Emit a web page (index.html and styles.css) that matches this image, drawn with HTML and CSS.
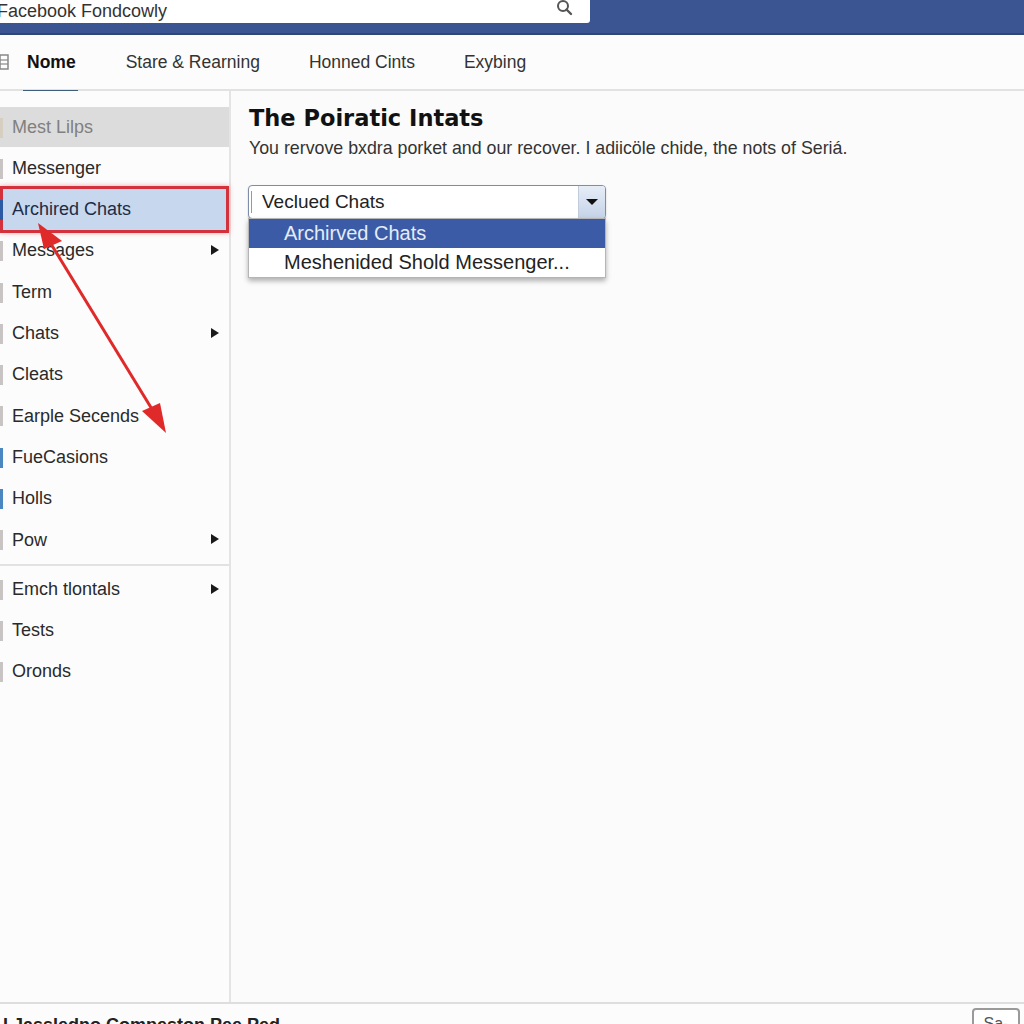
FILE: index.html
```html
<!DOCTYPE html>
<html lang="en">
<head>
    <meta charset="UTF-8">
    <title>Facebook Fondcowly</title>
    <link rel="stylesheet" href="styles.css">
</head>
<body>

    <div class="topbar">
        <div class="search-box">
            <span class="search-text">Facebook Fondcowly</span>
            <svg class="search-icon" width="18" height="18" viewBox="0 0 18 18">
                <circle cx="7" cy="6" r="5" fill="none" stroke="#555" stroke-width="2"/>
                <line x1="10.5" y1="9.5" x2="15" y2="14" stroke="#555" stroke-width="2.4" stroke-linecap="round"/>
            </svg>
        </div>
    </div>

    <div class="tabs">
        <svg class="tab-icon" width="10" height="16" viewBox="0 0 10 16">
            <rect x="0" y="1" width="8" height="14" fill="none" stroke="#888" stroke-width="1.5"/>
            <line x1="0" y1="6" x2="8" y2="6" stroke="#888" stroke-width="1.2"/>
            <line x1="0" y1="10" x2="8" y2="10" stroke="#888" stroke-width="1.2"/>
        </svg>
        <span class="tab active">Nome</span>
        <span class="tab">Stare &amp; Rearning</span>
        <span class="tab">Honned Cints</span>
        <span class="tab">Exybing</span>
    </div>

    <div class="layout">
        <div class="sidebar">
            <div class="side-item muted">Mest Lilps</div>
            <div class="side-item">Messenger</div>
            <div class="side-item selected">Archired Chats</div>
            <div class="side-item has-sub">Messages</div>
            <div class="side-item">Term</div>
            <div class="side-item has-sub">Chats</div>
            <div class="side-item">Cleats</div>
            <div class="side-item">Earple Secends</div>
            <div class="side-item blue">FueCasions</div>
            <div class="side-item blue">Holls</div>
            <div class="side-item has-sub">Pow</div>
            <div class="side-divider"></div>
            <div class="side-item has-sub">Emch tlontals</div>
            <div class="side-item">Tests</div>
            <div class="side-item">Oronds</div>
        </div>

        <div class="main">
            <h1 class="title">The Poiratic Intats</h1>
            <p class="intro">You rervove bxdra porket and our recover. I adiicöle chide, the nots of Seriá.</p>

            <div class="select-wrap">
                <div class="select">
                    <span class="select-value">Veclued Chats</span>
                    <span class="select-btn"><span class="caret"></span></span>
                </div>
                <div class="select-menu">
                    <div class="menu-option highlighted">Archirved Chats</div>
                    <div class="menu-option">Meshenided Shold Messenger...</div>
                </div>
            </div>
        </div>

        <svg class="annotation" width="200" height="240" viewBox="0 0 200 240">
            <line x1="48" y1="28" x2="158" y2="208" stroke="#e02a2a" stroke-width="3"/>
            <polygon points="38,12 62,30 44,38" fill="#e02a2a"/>
            <polygon points="166,222 142,200 160,192" fill="#e02a2a"/>
        </svg>
    </div>

    <div class="footer">
        <span class="footer-text">I Jassledno Compeston Pee Ped</span>
        <span class="footer-btn">Sa-</span>
    </div>

</body>
</html>
```

FILE: styles.css
```css
* {
    margin: 0;
    padding: 0;
    box-sizing: border-box;
}

body {
    width: 1024px;
    height: 1024px;
    overflow: hidden;
    background: #fbfbfb;
    font-family: "Liberation Sans", Arial, sans-serif;
    color: #222;
}

.topbar {
    height: 35px;
    background: #3b5593;
    border-bottom: 2px solid #2f4676;
}

.search-box {
    width: 590px;
    height: 23px;
    background: #fff;
    border-radius: 0 0 3px 0;
    display: flex;
    align-items: center;
    justify-content: space-between;
    padding-right: 16px;
}

.search-text {
    margin-left: -3px;
    margin-top: -2px;
    font-size: 18px;
    line-height: 20px;
    color: #333;
}

.search-icon {
    margin-top: -6px;
}

.tabs {
    height: 56px;
    background: #fcfcfc;
    border-bottom: 2px solid #e2e2e2;
    display: flex;
    align-items: center;
}

.tab-icon {
    margin-left: 0;
    margin-right: 17px;
}

.tab {
    font-size: 17.5px;
    color: #333;
    margin-right: 49px;
    padding: 8px 0;
    position: relative;
}

.tab.active {
    font-weight: bold;
    color: #111;
    margin-right: 50px;
}

.tab.active::after {
    content: "";
    position: absolute;
    left: -4px;
    right: -2px;
    bottom: -12px;
    height: 3px;
    background: #3d5f7c;
}

.layout {
    display: flex;
    height: 911px;
    position: relative;
}

.sidebar {
    width: 231px;
    border-right: 2px solid #e4e4e4;
    padding-top: 16px;
    background: #fcfcfc;
}

.side-item {
    height: 41.3px;
    display: flex;
    align-items: center;
    padding-left: 12px;
    font-size: 18px;
    color: #2a2a2a;
    position: relative;
}

.side-item::before {
    content: "";
    position: absolute;
    left: 0;
    top: 11px;
    width: 3px;
    height: 20px;
    background: #c9c4c4;
}

.side-item.muted {
    background: #dcdcdc;
    color: #808080;
    height: 40px;
    margin-bottom: 1px;
}

.side-item.muted::before {
    background: #d6cec0;
}

.side-item.selected {
    background: #c7d7ee;
    outline: 3px solid #d3323c;
    outline-offset: -3px;
    box-shadow: 0 0 5px rgba(230, 60, 60, 0.45);
    height: 47px;
    margin: -3px 0 -3px;
    color: #1d2c44;
}

.side-item.selected::before {
    background: #2b5aa3;
    top: 14px;
}

.side-item.blue::before {
    background: #4a86c0;
}

.side-item.has-sub::after {
    content: "";
    position: absolute;
    right: 10px;
    top: 15px;
    border-left: 8px solid #1a1a1a;
    border-top: 5px solid transparent;
    border-bottom: 5px solid transparent;
}

.side-divider {
    height: 2px;
    background: #e2e2e2;
    margin: 3px 0 3px;
}

.main {
    flex: 1;
    padding: 13px 0 0 18px;
}

.title {
    font-family: "DejaVu Sans", Verdana, sans-serif;
    font-size: 22.5px;
    font-weight: bold;
    color: #111;
    line-height: 28px;
}

.intro {
    font-size: 17.8px;
    color: #333;
    margin-top: 6px;
    line-height: 20px;
}

.select-wrap {
    position: relative;
    width: 358px;
    margin-top: 27px;
    margin-left: -1px;
}

.select {
    height: 34px;
    border: 1px solid #7e8ea9;
    border-radius: 4px;
    background: #fff;
    display: flex;
    align-items: center;
    justify-content: space-between;
    box-shadow: 0 1px 2px rgba(0, 0, 0, 0.2);
    overflow: hidden;
}

.select-value {
    font-size: 19px;
    color: #222;
    padding-left: 10px;
    border-left: 1px solid #999;
    margin-left: 2px;
    line-height: 22px;
}

.select-btn {
    width: 27px;
    height: 100%;
    background: linear-gradient(#e6edf7, #c5d3e8);
    border-left: 1px solid #c0cbdc;
    display: flex;
    align-items: center;
    justify-content: center;
}

.caret {
    border-top: 6px solid #111;
    border-left: 6px solid transparent;
    border-right: 6px solid transparent;
}

.select-menu {
    position: absolute;
    top: 33px;
    left: 0;
    right: 0;
    background: #fff;
    border: 1px solid #b5b5b5;
    box-shadow: 0 3px 5px rgba(0, 0, 0, 0.3);
}

.menu-option {
    height: 29px;
    display: flex;
    align-items: center;
    padding-left: 35px;
    font-size: 20px;
    color: #222;
}

.menu-option.highlighted {
    background: #3b5ba6;
    color: #e4ecf8;
}

.annotation {
    position: absolute;
    left: 0;
    top: 120px;
}

.footer {
    height: 24px;
    border-top: 2px solid #dedede;
    display: flex;
    justify-content: space-between;
    align-items: flex-start;
    background: #fcfcfc;
}

.footer-text {
    font-size: 18px;
    font-weight: bold;
    color: #222;
    margin-left: 3px;
    margin-top: 11px;
}

.footer-btn {
    margin-top: 4px;
    margin-right: 4px;
    width: 48px;
    height: 30px;
    border: 2px solid #9a9a9a;
    border-radius: 4px;
    background: #fff;
    font-size: 16px;
    color: #555;
    text-align: center;
    padding-top: 5px;
}
```
